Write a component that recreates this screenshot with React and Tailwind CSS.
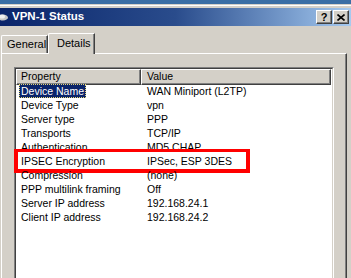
const rows = [
  { name: "Device Name", value: "WAN Miniport (L2TP)", selected: true },
  { name: "Device Type", value: "vpn" },
  { name: "Server type", value: "PPP" },
  { name: "Transports", value: "TCP/IP" },
  { name: "Authentication", value: "MD5 CHAP" },
  { name: "IPSEC Encryption", value: "IPSec, ESP 3DES", marked: true },
  { name: "Compression", value: "(none)" },
  { name: "PPP multilink framing", value: "Off" },
  { name: "Server IP address", value: "192.168.24.1" },
  { name: "Client IP address", value: "192.168.24.2" },
];

function TitleButton({ children }) {
  return (
    <div className="flex h-[14px] w-[16px] items-center justify-center border border-t-white border-l-white border-r-[#404040] border-b-[#404040] bg-[#d4d0c8] shadow-[inset_-1px_-1px_#808080]">
      {children}
    </div>
  );
}

function App() {
  return (
    <div className="relative h-[278px] w-[351px] overflow-hidden bg-[#d4d0c8] font-['Liberation_Sans',Arial,sans-serif] text-[10.5px] text-black">
      <div className="h-[4px] bg-[#3a6ea5]" />
      <div className="h-px bg-[#d4d0c8]" />
      <div className="h-px bg-white" />
      <div className="h-[2px] bg-[#d4d0c8]" />

      {/* title bar */}
      <div className="flex h-[18px] items-center bg-gradient-to-r from-[#0a246a] via-[#2a4c8c] to-[#a6caf0] pr-[2px]">
        <svg width="10" height="8" viewBox="0 0 10 8" className="ml-[-2px]">
          <ellipse cx="5" cy="4.5" rx="5" ry="3" fill="#c8c8c8" />
          <ellipse cx="4" cy="3.5" rx="3" ry="2" fill="#f0f0f0" />
        </svg>
        <span className="ml-[4px] text-[11.5px] font-bold text-white">VPN-1 Status</span>
        <div className="ml-auto flex gap-[1px]">
          <TitleButton>
            <span className="text-[11px] font-bold leading-none">?</span>
          </TitleButton>
          <TitleButton>
            <svg width="8" height="7" viewBox="0 0 8 7">
              <path d="M0.5 0.5 L7.5 6.5 M7.5 0.5 L0.5 6.5" stroke="black" strokeWidth="1.6" />
            </svg>
          </TitleButton>
        </div>
      </div>

      {/* tabs */}
      <div className="flex items-end pt-[7px] text-[11px]">
        <div className="ml-[1px] flex h-[18px] w-[47px] items-center rounded-tl-[2px] border-t border-l border-t-white border-l-white border-r border-r-[#404040] pl-[5px] shadow-[inset_-1px_0_#808080]">
          General
        </div>
        <div className="relative z-10 -mb-px flex h-[21px] w-[47px] items-center rounded-tl-[2px] border-t border-l border-t-white border-l-white border-r border-r-[#404040] bg-[#d4d0c8] pl-[8px] pb-px shadow-[inset_-1px_0_#808080]">
          Details
        </div>
      </div>

      {/* panel */}
      <div className="ml-[1px] h-[240px] w-[346px] border-t border-l border-t-white border-l-white border-r border-r-[#404040] pl-[12px] pt-[13px] shadow-[inset_-1px_0_#808080]">
        <div className="h-[230px] w-[320px] border border-t-[#808080] border-l-[#808080] border-r-white border-b-white">
          <div className="h-full border border-t-[#404040] border-l-[#404040] border-r-[#d4d0c8] border-b-[#d4d0c8] bg-white">
            <div className="flex h-[16px]">
              <div className="flex w-[125px] items-center border border-t-white border-l-white border-r-[#404040] border-b-[#404040] bg-[#d4d0c8] pl-[4px] shadow-[inset_-1px_-1px_#808080]">
                Property
              </div>
              <div className="flex w-[190px] items-center border border-t-white border-l-white border-r-[#404040] border-b-[#404040] bg-[#d4d0c8] pl-[5px] shadow-[inset_-1px_-1px_#808080]">
                Value
              </div>
            </div>
            {rows.map((row) => (
              <div key={row.name} className="relative flex h-[14px] items-center">
                {row.marked && (
                  <div className="absolute left-[-2px] top-[-6px] h-[24px] w-[236px] border-4 border-t-[3px] border-[#ff0000] bg-white" />
                )}
                <div className="relative w-[125px] pl-[3px]">
                  <span
                    className={
                      row.selected
                        ? "border border-dotted border-[#e8d878] bg-[#0a246a] px-[1px] text-white"
                        : "px-[2px]"
                    }
                  >
                    {row.name}
                  </span>
                </div>
                <div className="relative pl-[6px]">{row.value}</div>
              </div>
            ))}
          </div>
        </div>
      </div>
    </div>
  );
}

export default App;
